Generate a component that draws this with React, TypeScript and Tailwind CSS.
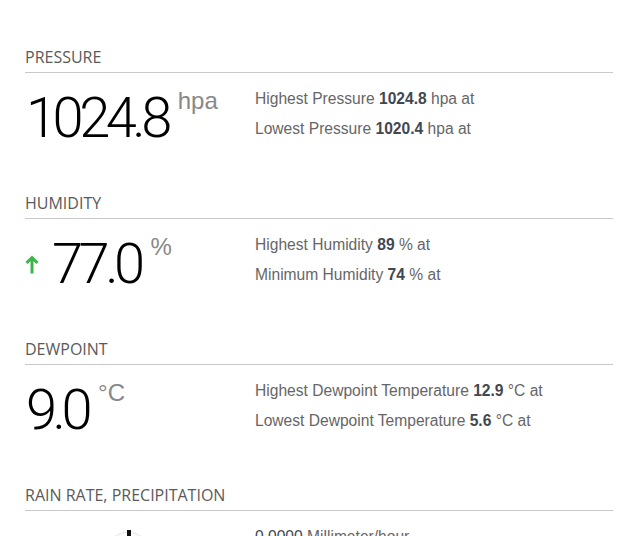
import React from 'react';

interface Stat {
    label: string;
    value: string;
    unit: string;
}

interface Section {
    title: string;
    value: string;
    unit: string;
    trend?: 'up';
    stats: Stat[];
}

const sections: Section[] = [
    {
        title: 'Pressure',
        value: '1024.8',
        unit: 'hpa',
        stats: [
            { label: 'Highest Pressure', value: '1024.8', unit: 'hpa' },
            { label: 'Lowest Pressure', value: '1020.4', unit: 'hpa' },
        ],
    },
    {
        title: 'Humidity',
        value: '77.0',
        unit: '%',
        trend: 'up',
        stats: [
            { label: 'Highest Humidity', value: '89', unit: '%' },
            { label: 'Minimum Humidity', value: '74', unit: '%' },
        ],
    },
    {
        title: 'Dewpoint',
        value: '9.0',
        unit: '°C',
        stats: [
            { label: 'Highest Dewpoint Temperature', value: '12.9', unit: '°C' },
            { label: 'Lowest Dewpoint Temperature', value: '5.6', unit: '°C' },
        ],
    },
];

const ArrowUp = () => (
    <svg width="14" height="20" viewBox="0 0 14 20" className="mr-3 shrink-0">
        <path d="M7 19.5V3.5M1.5 9L7 3.5L12.5 9" fill="none" stroke="#3cb54a" strokeWidth="3" />
    </svg>
);

const Heading = ({ title }: { title: string }) => (
    <h2 className="font-['Open_Sans',sans-serif] text-[16px] leading-[20px] uppercase text-[#5a5a5a] pb-[5px] border-b border-[#c8c8c8]">
        {title}
    </h2>
);

const App: React.FC = () => {
    return (
        <div className="min-h-screen bg-white pt-[47px] pl-[25px] pr-[23px] font-['Liberation_Sans',Arial,sans-serif]">
            {sections.map((s) => (
                <section key={s.title} className="mb-[47px]">
                    <Heading title={s.title} />
                    <div className="grid grid-cols-[230px_1fr]">
                        {/* Current reading */}
                        <div className="flex items-center mt-[17px]">
                            {s.trend === 'up' && <ArrowUp />}
                            <div className="flex items-start">
                                <span className="font-['Roboto',sans-serif] font-light text-[56px] leading-none tracking-[-4.5px] text-black pl-[1px]">
                                    {s.value}
                                </span>
                                <span className="text-[24px] leading-none text-[#888] ml-[10px] -mt-[1px]">{s.unit}</span>
                            </div>
                        </div>

                        {/* High / low */}
                        <div className="mt-[11px] text-[15.6px] leading-[30px] text-[#666]">
                            {s.stats.map((st) => (
                                <p key={st.label}>
                                    {st.label} <b className="font-bold text-[#3f4851]">{st.value}</b> {st.unit} at
                                </p>
                            ))}
                        </div>
                    </div>
                </section>
            ))}

            {/* Rain rate, cut off by the window */}
            <section>
                <Heading title="Rain rate, precipitation" />
                <div className="grid grid-cols-[230px_1fr]">
                    <div className="mt-[12px] pl-[88px]">
                        <svg width="30" height="20" viewBox="0 0 30 20">
                            <path d="M2 14Q15 4 28 14" fill="none" stroke="#f0f0f0" strokeWidth="2" />
                            <rect x="14" y="7" width="4" height="13" fill="#111" />
                        </svg>
                    </div>
                    <div className="mt-[11px] text-[15.6px] leading-[30px] text-[#666]">
                        <p>
                            <span className="text-[#3f4851]">0.0000</span> Millimeter/hour
                        </p>
                    </div>
                </div>
            </section>
        </div>
    );
};

export default App;
